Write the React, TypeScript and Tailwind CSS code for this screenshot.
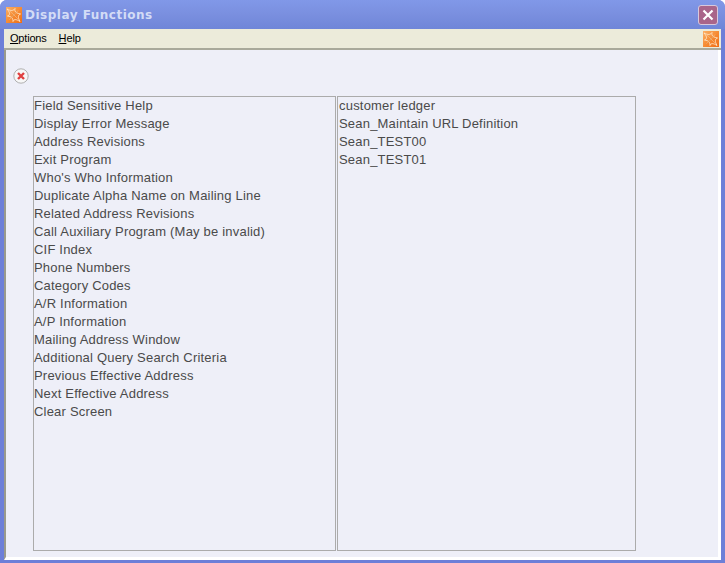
const left = ["Field Sensitive Help","Display Error Message","Address Revisions","Exit Program","Who's Who Information","Duplicate Alpha Name on Mailing Line","Related Address Revisions","Call Auxiliary Program (May be invalid)","CIF Index","Phone Numbers","Category Codes","A/R Information","A/P Information","Mailing Address Window","Additional Query Search Criteria","Previous Effective Address","Next Effective Address","Clear Screen"];
const right = ["customer ledger","Sean_Maintain URL Definition","Sean_TEST00","Sean_TEST01"];

function Logo({ id }: { id: string }) {
  return (
    <svg width={16} height={16} viewBox="0 0 16 16" className="shrink-0">
      <defs>
        <linearGradient id={id} x1="0" y1="0" x2="1" y2="1">
          <stop offset="0" stopColor="#fbb066" />
          <stop offset="0.5" stopColor="#f68c34" />
          <stop offset="1" stopColor="#ef6c14" />
        </linearGradient>
      </defs>
      <rect width="16" height="16" fill={`url(#${id})`} />
      <path d="M1 2 C5 4 7 4 9 1.5 C8.5 4 9 6 14.5 7 C12 8 11.5 10 14 14.5 C10 12 8 12 7 14.5 C7 11.5 6 9.5 1.5 9 C4 8 4.5 6 1 2 Z" fill="none" stroke="#ffe6c8" strokeWidth="0.9" />
      <path d="M4 4 L8 8 L12.5 12.5 M12 3.5 L8 8 L3.5 12.5" stroke="#fbc48c" strokeWidth="0.6" />
    </svg>
  );
}

function List({ items, className }: { items: string[]; className: string }) {
  return (
    <div className={`h-[455px] border border-[#ababab] bg-[#eeeff8] ${className}`}>
      {items.map((t) => (
        <div key={t} className="h-[18px] text-[13px] leading-[18px] text-[#4a4a4a] whitespace-nowrap font-['Liberation_Sans',sans-serif] tracking-[0.2px]">
          {t}
        </div>
      ))}
    </div>
  );
}

export default function App() {
  return (
    <div className="w-[725px] h-[563px] bg-white overflow-hidden">
      <div className="w-full h-full flex flex-col bg-[#6d7fd8] rounded-t-[7px] overflow-hidden">
        <div className="h-[29px] shrink-0 flex items-center pl-[6px] pr-[7px] bg-gradient-to-b from-[#8198e8] via-[#7a8fdf] to-[#6f86d8]">
          <div className="mt-[1px]"><Logo id="a" /></div>
          <span className="ml-[3px] text-[12px] font-bold tracking-[0.5px] text-[#d3dcf6] font-['DejaVu_Sans',sans-serif]">Display Functions</span>
          <div className="ml-auto w-[20px] h-[20px] rounded-[3px] bg-[#a9658a] border border-[#d8c8dc] flex items-center justify-center">
            <svg width="12" height="12" viewBox="0 0 12 12">
              <path d="M1.5 1.5 L10.5 10.5 M10.5 1.5 L1.5 10.5" stroke="#ffffff" strokeWidth="2.2" />
            </svg>
          </div>
        </div>
        <div className="flex-1 flex flex-col mx-[4px] mb-[3px] min-h-0">
          <div className="h-[21px] shrink-0 flex items-center bg-[#ecebda] border-b-2 border-[#a9a99a] pr-[2px]">
            <span className="ml-[6px] text-[11px] tracking-[-0.2px] text-black font-['Liberation_Sans',sans-serif]"><u>O</u>ptions</span>
            <span className="ml-[12px] text-[11px] tracking-[-0.1px] text-black font-['Liberation_Sans',sans-serif]"><u>H</u>elp</span>
            <div className="ml-auto mt-[1px]"><Logo id="b" /></div>
          </div>
          <div className="flex-1 min-h-0 bg-[#eeeff8] border-l-2 border-l-[#9a9a8c] border-b-[3px] border-b-white border-r-[3px] border-r-white">
            <div className="pt-[18px] pl-[7px] h-[46px]">
              <svg width="16" height="16" viewBox="0 0 16 16">
                <circle cx="8" cy="8" r="7.2" fill="#f7f7f7" stroke="#b0b0b0" />
                <path d="M5 5 L11 11 M11 5 L5 11" stroke="#e04040" strokeWidth="2.4" />
              </svg>
            </div>
            <div className="flex pl-[27px] gap-px">
              <List items={left} className="w-[303px]" />
              <List items={right} className="w-[299px] pl-px" />
            </div>
          </div>
        </div>
      </div>
    </div>
  );
}
